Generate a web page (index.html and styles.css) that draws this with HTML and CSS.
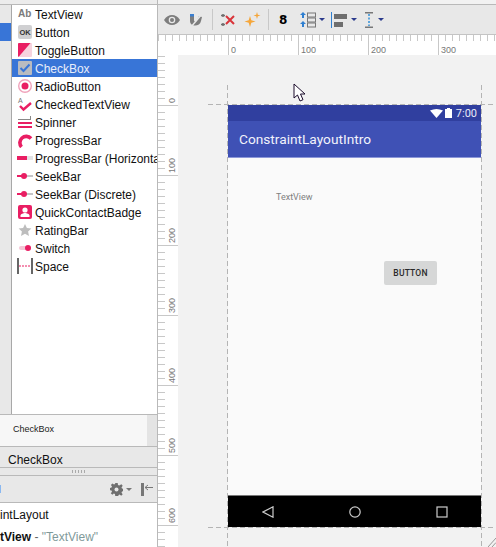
FILE: index.html
```html
<!DOCTYPE html>
<html lang="en">
<head>
<meta charset="utf-8">
<title>ConstraintLayoutIntro</title>
<link rel="stylesheet" href="styles.css">
</head>
<body>
<div class="app">
  <aside class="left">
    <div class="left-cap"></div>
    <div class="palette">
      <div class="strip"><div class="strip-sel"></div></div>
      <ul class="widgets">
        <li class="widget"><svg class="ico" viewBox="0 0 16 16"><text x="1" y="11" class="ab">Ab</text></svg><span>TextView</span></li>
        <li class="widget"><svg class="ico" viewBox="0 0 16 16"><rect x="1" y="1" width="14" height="14" rx="2" fill="#d0d0d2"/><text x="2.4" y="11" class="ok">OK</text></svg><span>Button</span></li>
        <li class="widget"><svg class="ico" viewBox="0 0 16 16"><rect x="1" y="1" width="14" height="14" rx="1" fill="#f6d3de"/><path d="M1 14V2a1 1 0 0 1 1-1h11.500L1.500 15z" fill="#e91e63"/></svg><span>ToggleButton</span></li>
        <li class="widget selected"><svg class="ico" viewBox="0 0 16 16"><rect x="1" y="1" width="14" height="14" rx="1" fill="#b9bbc0"/><path d="M3.500 8l3 3 6-6.500" fill="none" stroke="#3875d7" stroke-width="2"/></svg><span>CheckBox</span></li>
        <li class="widget"><svg class="ico" viewBox="0 0 16 16"><circle cx="8" cy="8" r="6.300" fill="none" stroke="#f0a3bb" stroke-width="1.400"/><circle cx="8" cy="8" r="3.500" fill="#e91e63"/></svg><span>RadioButton</span></li>
        <li class="widget"><svg class="ico" viewBox="0 0 16 16"><text x="1" y="7" class="mini">A</text><path d="M3 10l3.500 3.500L14 7" fill="none" stroke="#e91e63" stroke-width="2.400"/></svg><span>CheckedTextView</span></li>
        <li class="widget"><svg class="ico" viewBox="0 0 16 16"><path d="M13.500 2v3" stroke="#888"/><rect x="1" y="5" width="13" height="1" fill="#888"/><rect x="1" y="8" width="14" height="2" fill="#e91e63"/><rect x="1" y="12" width="14" height="2" fill="#e91e63"/></svg><span>Spinner</span></li>
        <li class="widget"><svg class="ico" viewBox="0 0 16 16"><path d="M4.500 15A6 6 0 1 1 14 6.500" fill="none" stroke="#e91e63" stroke-width="3.600"/></svg><span>ProgressBar</span></li>
        <li class="widget"><svg class="ico" viewBox="0 0 16 16"><rect y="6" width="16" height="4" fill="#e2e2e4"/><rect y="6" width="10" height="4" fill="#e91e63"/></svg><span>ProgressBar (Horizontal)</span></li>
        <li class="widget"><svg class="ico" viewBox="0 0 16 16"><rect y="7" width="16" height="2" fill="#c4c4c6"/><rect y="7" width="7" height="2" fill="#e91e63"/><circle cx="7" cy="8" r="3" fill="#e91e63"/></svg><span>SeekBar</span></li>
        <li class="widget"><svg class="ico" viewBox="0 0 16 16"><rect y="7" width="16" height="2" fill="#c4c4c6"/><rect y="7" width="7" height="2" fill="#e91e63"/><circle cx="7" cy="8" r="3" fill="#e91e63"/></svg><span>SeekBar (Discrete)</span></li>
        <li class="widget"><svg class="ico" viewBox="0 0 16 16"><rect x="1" y="1" width="14" height="14" rx="2" fill="#e91e63"/><circle cx="8" cy="6" r="2.600" fill="#fff"/><path d="M3.500 13v-1.500c0-1.500 3-2.500 4.500-2.500s4.500 1 4.500 2.500V13z" fill="#fff"/></svg><span>QuickContactBadge</span></li>
        <li class="widget"><svg class="ico" viewBox="0 0 16 16"><path d="M8 2l1.900 4.100 4.500.5-3.300 3 .9 4.400L8 11.800 4 14l.9-4.400-3.300-3 4.500-.5z" fill="#bdbdbd"/></svg><span>RatingBar</span></li>
        <li class="widget"><svg class="ico" viewBox="0 0 16 16"><rect x="2" y="6" width="12" height="4" rx="2" fill="#f4c6d6"/><circle cx="11" cy="8" r="3" fill="#e91e63"/></svg><span>Switch</span></li>
        <li class="widget"><svg class="ico" viewBox="0 0 16 16"><rect x="0" y="0" width="2" height="16" fill="#666"/><rect x="14" y="0" width="2" height="16" fill="#666"/><path d="M2 8h12" stroke="#e91e63" stroke-width="1" stroke-dasharray="2 1"/></svg><span>Space</span></li>
      </ul>
    </div>
    <div class="preview"><div class="preview-main">CheckBox</div><div class="preview-side"></div></div>
    <div class="picked">CheckBox</div>
    <div class="grip"><span class="grip-dots"></span></div>
    <div class="tree-bar">
      <span class="tree-tick"></span>
      <svg class="gear" viewBox="0 0 13 13"><path d="M5.300 0h2.400l.3 1.900 1.200.5L11.400 1.300l1.300 1.500-1.200 1.600.5 1.100 1.900.3v2.400l-1.900.3-.5 1.200 1.200 1.500-1.500 1.500-1.600-1.200-1.100.5-.3 1.900H5.300L5 11.100l-1.200-.5-1.500 1.200-1.500-1.500 1.200-1.600-.5-1.100L0 7.300V5l1.500-.4.500-1.200-1.100-1.500 1.500-1.500L4 1.500l1-.5z" fill="#6f6f6f"/><circle cx="6.500" cy="6.500" r="2" fill="#e8e8e8"/></svg>
      <span class="caret-gray"></span>
      <svg class="pin" viewBox="0 0 13 13"><rect x="0" y="0" width="3" height="13" fill="#777"/><path d="M4 4.500h8M4 4.500l3-2.500M4 4.500l3 2.500" stroke="#777" fill="none"/></svg>
    </div>
    <div class="tree">
      <div class="tree-row">intLayout</div>
      <div class="tree-row"><b>tView</b> <span class="dash">-</span> <span class="quoted">"TextView"</span></div>
    </div>
  </aside>

  <main class="right">
    <div class="right-cap"></div>
    <div class="toolbar">
      <svg class="tool eye" viewBox="0 0 16 12"><path d="M0 6c2-3.500 5-5 8-5s6 1.500 8 5c-2 3.500-5 5-8 5S2 9.500 0 6z" fill="#7d7d7d"/><circle cx="8" cy="6" r="3.300" fill="#e8e8e8"/><circle cx="8" cy="6" r="2" fill="#7d7d7d"/></svg>
      <svg class="tool magnet" viewBox="0 0 14 14"><path d="M1 1h4v6c0 2 3 2 3 0L10 3l3 1-1 4c-1 6-11 6-11 0z" fill="#7d7d7d"/><rect x="1" y="1" width="4" height="2.500" fill="#3b7fd0"/><path d="M2 14L13 1" stroke="#e8e8e8" stroke-width="1.500"/></svg>
      <span class="sep"></span>
      <svg class="tool clear" viewBox="0 0 17 16"><path d="M4 2v3M2 3.500h4M4 11v3M2 12.500h4" stroke="#6e6e6e" stroke-width="1.500"/><path d="M7 4l8 8M15 4l-8 8" stroke="#d9343a" stroke-width="2"/></svg>
      <svg class="tool infer" viewBox="0 0 17 16"><path d="M6 4l1.300 4.200 4.200 1.300-4.200 1.300L6 15l-1.300-4.200-4.200-1.300 4.200-1.300z" fill="#f5a63a"/><path d="M13 0l.8 2.700 2.700.8-2.700.8-.8 2.700-.8-2.700L9.500 3.500l2.700-.8z" fill="#f5a63a"/></svg>
      <span class="sep sep-b"></span>
      <b class="margin-num">8</b>
      <svg class="tool pack" viewBox="0 0 17 16"><path d="M4 0l3 3H5v3H3V3H1zM4 9l3 3H5v3H3v-3H1z" fill="#2f7fd0"/><rect x="8.500" y="1" width="8" height="4" fill="none" stroke="#777"/><rect x="8.500" y="6" width="8" height="4" fill="none" stroke="#777"/><rect x="8.500" y="11" width="8" height="4" fill="none" stroke="#777"/></svg>
      <span class="caret"></span>
      <svg class="tool align" viewBox="0 0 17 16"><rect x="0" y="0" width="1" height="16" fill="#2f7fd0"/><rect x="3" y="2" width="13" height="5" fill="#6e6e6e"/><rect x="3" y="10" width="9" height="5" fill="#6e6e6e"/></svg>
      <span class="caret"></span>
      <svg class="tool distribute" viewBox="0 0 8 16"><rect x="0" y="0" width="8" height="1.500" fill="#777"/><rect x="0" y="14.500" width="8" height="1.500" fill="#777"/><path d="M4 2v12" stroke="#2f8fd8" stroke-dasharray="2 1.500" stroke-width="1.500"/></svg>
      <span class="caret caret-i"></span>
    </div>
    <div class="ruler-top">
      <div class="tick-cell"></div>
      <div class="tick-cell major">0</div>
      <div class="tick-cell major">100</div>
      <div class="tick-cell major">200</div>
      <div class="tick-cell major">300</div>
    </div>
    <div class="work">
      <div class="ruler-left">
        <div class="v-cell first"><span>0</span></div>
        <div class="v-cell"><span>100</span></div>
        <div class="v-cell"><span>200</span></div>
        <div class="v-cell"><span>300</span></div>
        <div class="v-cell"><span>400</span></div>
        <div class="v-cell"><span>500</span></div>
        <div class="v-cell"><span>600</span></div>
      </div>
      <div class="canvas">
        <span class="guide-v guide-l"></span>
        <span class="guide-v guide-r"></span>
        <span class="guide-h guide-t"></span>
        <span class="guide-h guide-b"></span>
        <div class="device">
          <div class="status">
            <svg class="wifi" viewBox="0 0 13 9"><path d="M0 1.500Q6.500-1.500 13 1.500L6.500 9z" fill="#fff"/></svg>
            <svg class="battery" viewBox="0 0 7 10"><path d="M2 0h3v1h2v9H0V1h2z" fill="#fff"/></svg>
            <span class="clock">7:00</span>
          </div>
          <div class="appbar">ConstraintLayoutIntro</div>
          <div class="content">
            <span class="w-text">TextView</span>
            <span class="w-button">BUTTON</span>
          </div>
          <div class="nav">
            <svg class="nav-i" viewBox="0 0 12 12"><path d="M11 .8v10.400L1 6z" fill="none" stroke="#ccc" stroke-width="1.200"/></svg>
            <svg class="nav-i" viewBox="0 0 12 12"><circle cx="6" cy="6" r="5.200" fill="none" stroke="#ccc" stroke-width="1.200"/></svg>
            <svg class="nav-i" viewBox="0 0 12 12"><rect x="1" y="1" width="10" height="10" fill="none" stroke="#ccc" stroke-width="1.200"/></svg>
          </div>
        </div>
        <svg class="cursor" viewBox="0 0 13 20"><path d="M1 1v14l3.500-3 2.500 6 3-1.300L7.500 11H12z" fill="#fff" stroke="#1a0a2a" stroke-width="1"/></svg>
        <svg class="resize" viewBox="0 0 8 10"><path d="M0 10L8 1M4 10L8 5.500" stroke="#999" fill="none"/></svg>
      </div>
    </div>
  </main>
</div>
</body>
</html>
```
FILE: styles.css
```css
* { box-sizing: border-box; }
html, body { margin: 0; padding: 0; }
body { width: 496px; height: 547px; overflow: hidden; background: #f2f2f2; font-family: "Liberation Sans", Arial, sans-serif; font-size: 12px; color: #111; }
.app { display: flex; width: 496px; height: 547px; overflow: hidden; }

/* left column */
.left { width: 158px; flex: none; display: flex; flex-direction: column; border-right: 1px solid #b9b9b9; background: #fff; }
.left-cap { height: 5px; flex: none; background: #ececec; border-bottom: 1px solid #b9b9b9; }
.palette { height: 410px; flex: none; display: flex; border-bottom: 1px solid #b9b9b9; }
.strip { width: 12px; flex: none; padding-top: 18px; background: #e8e8e8; border-right: 1px solid #a8a8a8; }
.strip-sel { height: 18px; background: #3875d7; }
.widgets { list-style: none; margin: 0; padding: 0; flex: 1; min-width: 0; overflow: hidden; }
.widget { display: flex; align-items: center; height: 18px; padding-left: 5px; gap: 2px; white-space: nowrap; letter-spacing: -.02px; }
.widget.selected { background: #3875d7; color: #e8eefa; }
.widget span { padding-top: 2px; }
.ico { width: 16px; height: 16px; flex: none; }
.ab { font: bold 10px "Liberation Sans", sans-serif; fill: #7b7b7b; }
.ok { font: bold 7.500px "Liberation Sans", sans-serif; fill: #333; }
.mini { font: 7px "Liberation Sans", sans-serif; fill: #777; }

.preview { height: 32px; flex: none; display: flex; border-bottom: 1px solid #b9b9b9; background: #f7f7f7; }
.preview-main { flex: 1; display: flex; align-items: center; padding: 0 0 3px 13px; font-size: 9px; color: #222; }
.preview-side { width: 10px; background: #e4e4e4; }
.picked { height: 21px; flex: none; padding-left: 8px; line-height: 26px; background: #e8e8e8; border-bottom: 1px solid #b9b9b9; overflow: hidden; }
.grip { height: 8px; flex: none; display: flex; justify-content: center; align-items: center; background: #e8e8e8; border-bottom: 1px solid #b9b9b9; }
.grip-dots { width: 14px; height: 3px; background: repeating-linear-gradient(90deg, #aaa 0 1px, transparent 1px 3px); }
.tree-bar { height: 27px; flex: none; display: flex; align-items: center; background: #e8e8e8; border-bottom: 1px solid #b9b9b9; }
.tree-tick { width: 1px; height: 8px; background: #8ab8f0; }
.gear { width: 13px; height: 13px; margin-left: 109px; }
.caret-gray { width: 0; height: 0; margin-left: 3px; border: 3px solid transparent; border-top: 3px solid #777; border-bottom: 0; }
.pin { width: 13px; height: 13px; margin-left: 9px; }
.tree { flex: 1; background: #fff; }
.tree-row { height: 22px; line-height: 24px; white-space: nowrap; }
.dash { color: #666; }
.quoted { color: #7f9a9a; }

/* right column */
.right { flex: 1; min-width: 0; display: flex; flex-direction: column; }
.right-cap { height: 5px; flex: none; background: #f2f2f2; border-bottom: 1px solid #b9b9b9; }
.toolbar { height: 30px; flex: none; display: flex; align-items: center; padding-left: 6px; background: #e8e8e8; border-bottom: 1px solid #c4c4c4; }
.tool { flex: none; }
.eye { width: 16px; height: 12px; }
.magnet { width: 14px; height: 14px; margin-left: 9px; }
.sep { width: 1px; height: 21px; margin-left: 9px; background: #c8c8c8; flex: none; }
.clear { width: 17px; height: 16px; margin-left: 6px; }
.infer { width: 17px; height: 16px; margin-left: 8px; }
.sep-b { margin-left: 7px; }
.margin-num { width: 8px; margin-left: 10px; font-size: 12px; font-weight: bold; color: #000; font-family: "DejaVu Sans", sans-serif; }
.pack { width: 17px; height: 16px; margin-left: 12px; }
.caret { width: 0; height: 0; flex: none; margin-left: 3px; border: 3px solid transparent; border-top: 3px solid #2b3a8c; border-bottom: 0; }
.align { width: 17px; height: 16px; margin-left: 6px; }
.distribute { width: 8px; height: 16px; margin-left: 8px; }
.caret-i { margin-left: 5px; }

.ruler-top { height: 20px; flex: none; display: flex; background-color: #fff; background-image: repeating-linear-gradient(90deg, #c8c8c8 0 1px, transparent 1px 7px); background-size: 100% 6px; background-repeat: no-repeat; background-position: 0 0; }
.tick-cell { width: 70px; flex: none; font-size: 9px; color: #777; }
.tick-cell.major { border-left: 1px solid #c8c8c8; padding: 10px 0 0 2px; line-height: 10px; }

.work { flex: 1; min-height: 0; display: flex; }
.ruler-left { width: 20px; flex: none; background-color: #fff; background-image: repeating-linear-gradient(180deg, #c8c8c8 0 1px, transparent 1px 7px); background-size: 7px 100%; background-position: 0 1px; background-repeat: no-repeat; overflow: hidden; }
.v-cell { height: 70px; border-bottom: 1px solid #c8c8c8; display: flex; justify-content: flex-end; align-items: flex-end; padding: 0 1px 2px 0; font-size: 9px; color: #777; }
.v-cell.first { height: 51px; }
.v-cell span { writing-mode: vertical-rl; transform: rotate(180deg); line-height: 10px; }

.canvas { flex: 1; position: relative; background: #f2f2f2; overflow: hidden; }
.guide-v { position: absolute; top: 30px; bottom: 0; width: 1px; background: repeating-linear-gradient(180deg, #b4b4b4 0 5px, transparent 5px 8px); }
.guide-l { left: 49px; }
.guide-r { left: 303px; }
.guide-h { position: absolute; left: 30px; right: 0; height: 1px; background: repeating-linear-gradient(90deg, #b4b4b4 0 5px, transparent 5px 8px); }
.guide-t { top: 49px; }
.guide-b { top: 472px; }

.device { position: absolute; left: 50px; top: 50px; width: 253px; height: 422px; display: flex; flex-direction: column; background: #fafafa; }
.status { height: 16px; flex: none; display: flex; align-items: center; justify-content: flex-end; padding-right: 4px; background: #303f9f; }
.wifi { width: 13px; height: 9px; }
.battery { width: 7px; height: 10px; margin-left: 2px; }
.clock { margin-left: 4px; font: 11px Roboto, sans-serif; color: #e8eaf6; }
.appbar { height: 37px; flex: none; padding-left: 11px; background: #3f51b5; border-bottom: 1px solid #8c97d8; font: 400 13.700px/37px Roboto, sans-serif; color: #f2f3fb; }
.content { flex: 1; position: relative; }
.w-text { position: absolute; left: 48px; top: 33px; font: 9px/12px Roboto, sans-serif; color: #808080; }
.w-button { position: absolute; left: 156px; top: 103px; width: 53px; height: 24px; display: flex; align-items: center; justify-content: center; border-radius: 2px; background: #d6d7d7; font: 500 8.500px Roboto, sans-serif; color: #2a2a2a; letter-spacing: .2px; }
.nav { height: 32px; flex: none; display: flex; align-items: center; background: #000; border-top: 1px solid #777; padding-left: 34px; gap: 75px; }
.nav-i { width: 12px; height: 12px; }

.cursor { position: absolute; left: 115px; top: 28px; width: 13px; height: 20px; }
.resize { position: absolute; right: 0; bottom: 0; width: 8px; height: 10px; }
```
